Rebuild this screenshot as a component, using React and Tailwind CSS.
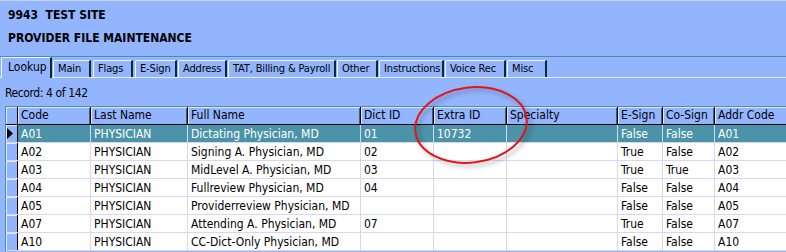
import React from "react";

const FONT = "font-['DejaVu_Sans_Condensed','DejaVu_Sans',sans-serif] font-stretch-condensed";

const tabs = [
  { label: "Main", cls: "ml-[1px] w-[38px]" },
  { label: "Flags", cls: "ml-[2px] w-[40px]" },
  { label: "E-Sign", cls: "ml-[2px] w-[42px]" },
  { label: "Address", cls: "ml-[1px] w-[49px]" },
  { label: "TAT, Billing & Payroll", cls: "ml-[1px] w-[108px]" },
  { label: "Other", cls: "ml-[1px] w-[41px]" },
  { label: "Instructions", cls: "ml-[1px] w-[65px]" },
  { label: "Voice Rec", cls: "ml-[1px] w-[61px]" },
  { label: "Misc", cls: "ml-[1px] w-[40px]" },
];

const cols = [
  { label: "Code", w: "w-[73px]" },
  { label: "Last Name", w: "w-[97px]" },
  { label: "Full Name", w: "w-[173px]" },
  { label: "Dict ID", w: "w-[73px]" },
  { label: "Extra ID", w: "w-[73px]" },
  { label: "Specialty", w: "w-[111px]" },
  { label: "E-Sign", w: "w-[45px]" },
  { label: "Co-Sign", w: "w-[52px]" },
  { label: "Addr Code", w: "w-[100px]" },
];

const rows = [
  ["A01", "PHYSICIAN", "Dictating Physician, MD", "01", "10732", "", "False", "False", "A01"],
  ["A02", "PHYSICIAN", "Signing A. Physician, MD", "02", "", "", "True", "False", "A02"],
  ["A03", "PHYSICIAN", "MidLevel A. Physician, MD", "03", "", "", "True", "True", "A03"],
  ["A04", "PHYSICIAN", "Fullreview Physician, MD", "04", "", "", "False", "False", "A04"],
  ["A05", "PHYSICIAN", "Providerreview Physician, MD", "", "", "", "False", "False", "A05"],
  ["A07", "PHYSICIAN", "Attending A. Physician, MD", "07", "", "", "True", "False", "A07"],
  ["A10", "PHYSICIAN", "CC-Dict-Only Physician, MD", "", "", "", "False", "False", "A10"],
];

export default function App() {
  return (
    <div className={`relative w-[786px] h-[252px] overflow-hidden bg-[#93b5fe] text-black text-[12px] ${FONT}`}>
      {/* Title area */}
      <div className="h-[57px] border-t border-t-[#c8d2f4] border-b border-b-[#4a8fa3] pl-[8px] pt-[7px] font-bold leading-[14px]">
        <div className="whitespace-pre">9943  TEST SITE</div>
        <div className="mt-[9px]">PROVIDER FILE MAINTENANCE</div>
      </div>

      {/* Tabs */}
      <div className="flex items-end h-[21px] pl-[1px] border-b border-b-[#e6eaff] text-[11px] tracking-[-0.15px]">
        <div className="relative z-10 -mb-px h-[21px] w-[51px] bg-[#93b5fe] border-l border-t border-l-[#f2f4ff] border-t-[#f2f4ff] border-r-2 border-r-[#0a2a3a] rounded-tl-[2px] pl-[6px] pt-[2px] leading-[14px] text-[12px] tracking-normal">
          Lookup
        </div>
        {tabs.map((t) => (
          <div
            key={t.label}
            className={`h-[17px] ${t.cls} shrink-0 border-l border-t border-l-[#f2f4ff] border-t-[#f2f4ff] border-r-2 border-r-[#0a2a3a] rounded-tl-[2px] pl-[4px] pt-[1px] leading-[14px] whitespace-nowrap`}
          >
            {t.label}
          </div>
        ))}
      </div>

      {/* Record line */}
      <div className="h-[28px] pl-[5px] pt-[8px] leading-[14px] tracking-[-0.4px]">Record: 4 of 142</div>

      {/* Grid */}
      <div className="ml-[5px] border-l border-t border-[#4a8fa3] w-[900px]">
        {/* header */}
        <div className="flex h-[18px] border-b border-b-black">
          <div className="w-[12px] shrink-0 border-r border-r-black shadow-[inset_1px_1px_0_#dfe6ff]" />
          {cols.map((c) => (
            <div
              key={c.label}
              className={`${c.w} shrink-0 border-r border-r-black shadow-[inset_1px_1px_0_#dfe6ff,inset_-1px_0_0_#3c5f80] pl-[3px] leading-[17px] whitespace-nowrap overflow-hidden`}
            >
              {c.label}
            </div>
          ))}
        </div>
        {rows.map((r, i) => {
          const sel = i === 0;
          return (
            <div key={i} className="flex h-[18px] border-b border-b-[#d6d6f6]">
              <div className="w-[12px] shrink-0 border-r border-r-black bg-[#93b5fe] shadow-[inset_1px_1px_0_#e4eaff] flex items-center pl-[1px]">
                {sel && (
                  <svg width="7" height="11" viewBox="0 0 7 11">
                    <path d="M0 0 L6 5.5 L0 11 Z" fill="#000" />
                  </svg>
                )}
              </div>
              {cols.map((c, j) => (
                <div
                  key={j}
                  className={`${c.w} shrink-0 border-r border-r-[#d6d6f6] pl-[3px] pt-[1px] leading-[16px] whitespace-nowrap overflow-hidden ${
                    sel ? "bg-[#4a93a8] text-white" : "bg-white text-black"
                  }`}
                >
                  {r[j]}
                </div>
              ))}
            </div>
          );
        })}
      </div>

      {/* Red annotation ellipse */}
      <svg
        className="absolute left-[405px] top-[80px] drop-shadow-[3px_3px_2px_rgba(0,0,0,0.3)]"
        width="132"
        height="94"
        viewBox="0 0 132 94"
      >
        <ellipse
          cx="66"
          cy="45"
          rx="56"
          ry="37.5"
          transform="rotate(-7 66 45)"
          fill="none"
          stroke="#e41414"
          strokeWidth="2"
        />
      </svg>
    </div>
  );
}
